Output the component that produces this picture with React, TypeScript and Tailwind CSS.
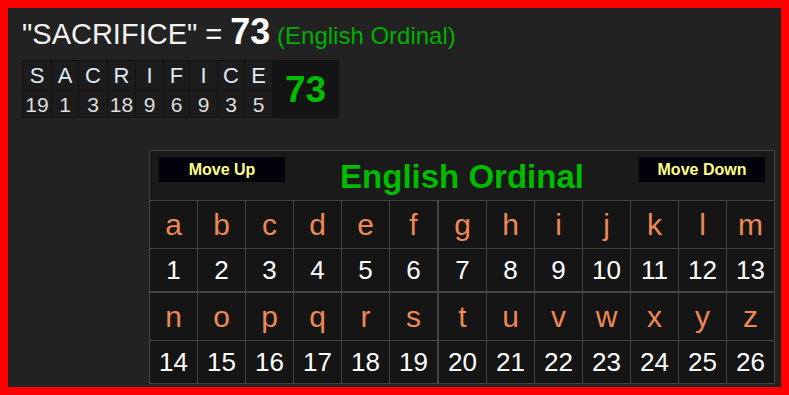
import React from "react";

const word = [
  ["S", "19"],
  ["A", "1"],
  ["C", "3"],
  ["R", "18"],
  ["I", "9"],
  ["F", "6"],
  ["I", "9"],
  ["C", "3"],
  ["E", "5"],
];

const letters = "abcdefghijklmnopqrstuvwxyz".split("");

function Half({ start }: { start: number }) {
  const ls = letters.slice(start, start + 13);
  return (
    <div className="grid grid-cols-[repeat(6,47px)_48px_repeat(6,47px)] grid-rows-[47px_42px] gap-px">
      {ls.map((l, i) => (
        <div
          key={"l" + l}
          className={
            "flex items-center justify-center bg-[#151515] text-[30px] leading-none text-[#ee8855] " +
            (i === 6 ? "border-l border-[#444]" : "")
          }
        >
          {l}
        </div>
      ))}
      {ls.map((l, i) => (
        <div
          key={"n" + l}
          className={
            "flex items-center justify-center bg-[#151515] text-[26px] leading-none text-white " +
            (i === 6 ? "border-l border-[#444]" : "")
          }
        >
          {start + i + 1}
        </div>
      ))}
    </div>
  );
}

export default function App() {
  return (
    <div
      className="w-[789px] h-[395px] border-8 border-[#ff0000] bg-[#222222] overflow-hidden"
      style={{ fontFamily: '"Liberation Sans", Arial, sans-serif' }}
    >
      <div className="flex items-baseline pl-[14px] mt-[6px] h-[34px] leading-none">
        <span className="text-[29px] text-[#f2f2f2]">"SACRIFICE" =&nbsp;</span>
        <span className="text-[36px] font-bold text-white">73</span>
        <span className="text-[24px] text-[#00b000]">&nbsp;(English Ordinal)</span>
      </div>

      <div className="ml-[14px] mt-[12px] flex w-fit border border-[#111] bg-[#111]">
        <div className="grid grid-cols-[28px_26px_28px_27px_27px_25px_27px_26px_27px] grid-rows-[29px_26px] gap-px">
          {word.map(([l], i) => (
            <div
              key={"w" + i}
              className="flex items-center justify-center bg-[#1c1c1c] text-[22px] leading-none text-[#dde9f4]"
            >
              {l}
            </div>
          ))}
          {word.map(([, n], i) => (
            <div
              key={"v" + i}
              className="flex items-center justify-center bg-[#1c1c1c] text-[21px] leading-none text-[#dddddd]"
            >
              {n}
            </div>
          ))}
        </div>
        <div className="ml-px flex w-[65px] items-center justify-center bg-[#141414] text-[37px] font-bold leading-none text-[#00bb00]">
          73
        </div>
      </div>

      <div className="ml-[141px] mt-[32px] flex w-[626px] flex-col gap-px border border-[#444] bg-[#444]">
        <div className="flex h-[49px] items-start justify-between bg-[#1a1a1a] px-[9px] pt-[6px]">
          <div className="flex h-[25px] w-[126px] items-center justify-center bg-[#02020a] text-[16px] font-bold leading-none text-[#ffff88]">
            Move Up
          </div>
          <div className="mt-[3px] text-[33px] font-bold leading-none text-[#00bb00]">
            English Ordinal
          </div>
          <div className="flex h-[25px] w-[126px] items-center justify-center bg-[#02020a] text-[16px] font-bold leading-none text-[#ffff88]">
            Move Down
          </div>
        </div>
        <Half start={0} />
        <div className="mt-px">
          <Half start={13} />
        </div>
      </div>
    </div>
  );
}
